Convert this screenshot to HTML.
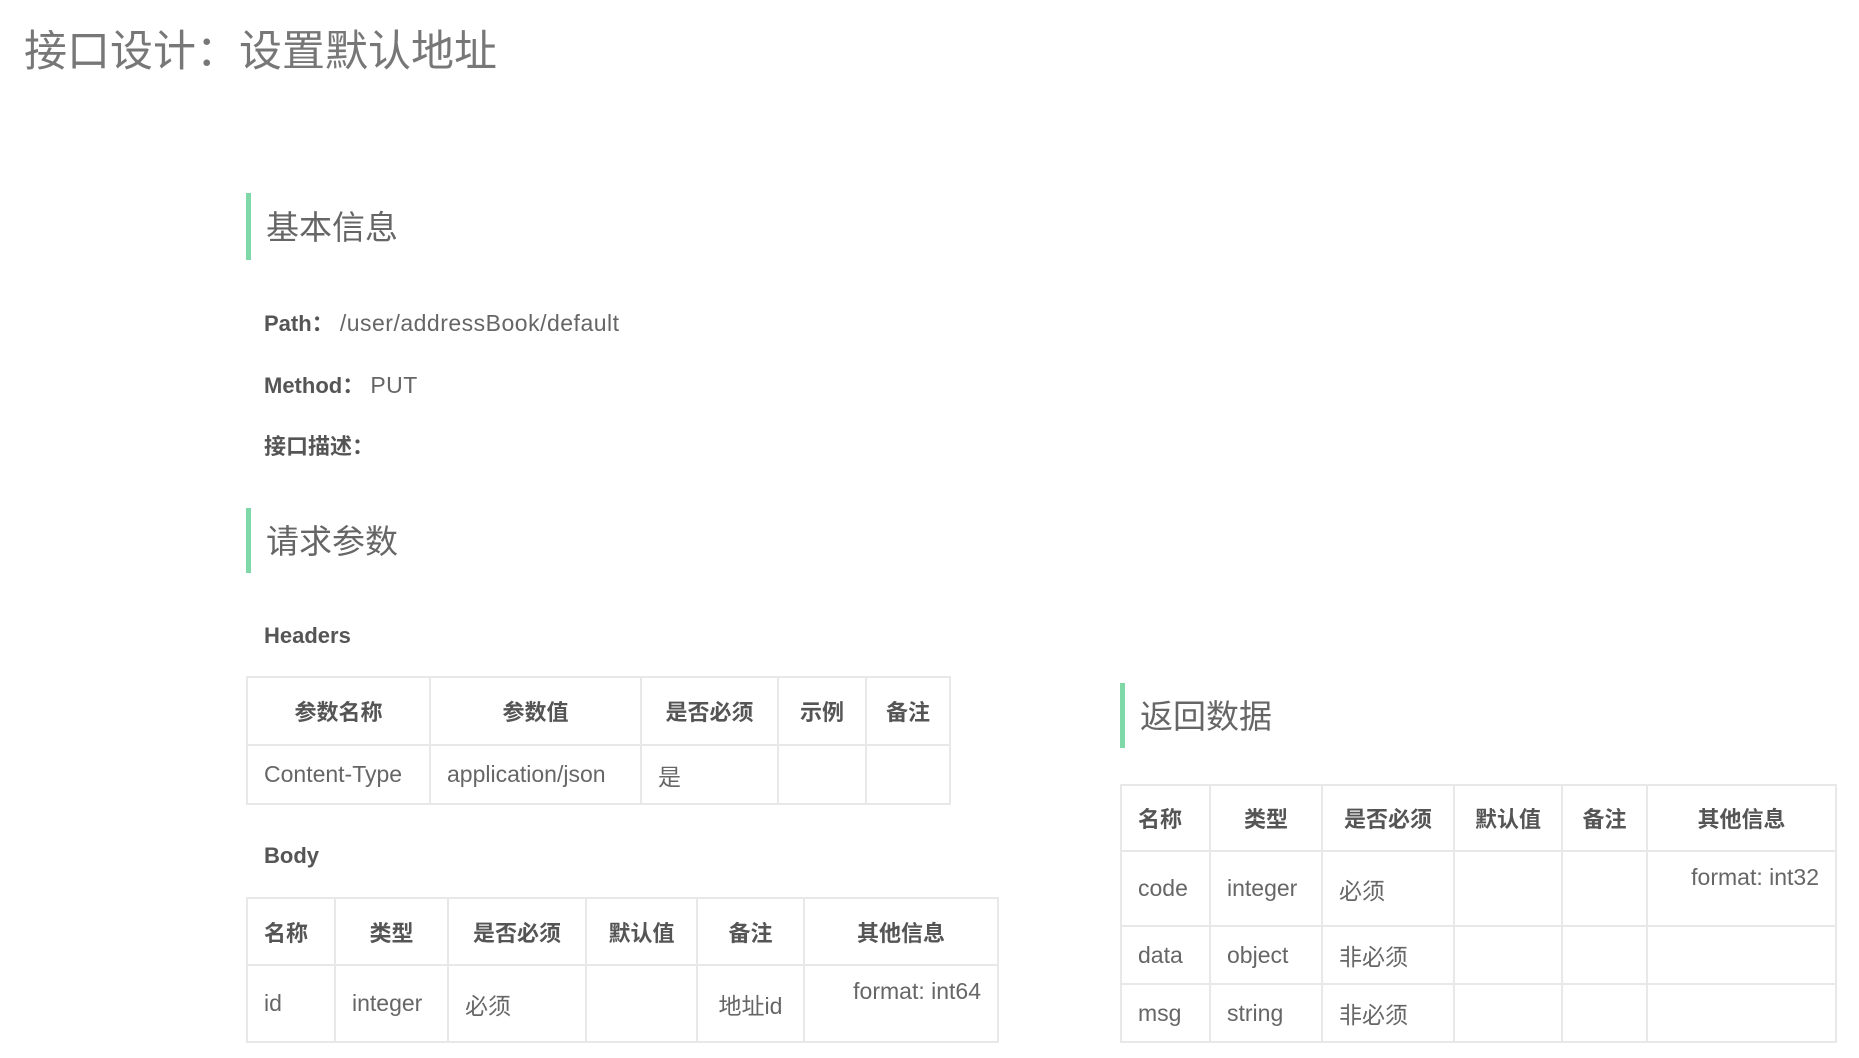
<!DOCTYPE html>
<html><head><meta charset="utf-8"><style>
*{margin:0;padding:0;box-sizing:border-box}
body{width:1859px;height:1058px;background:#fff;position:relative;overflow:hidden;font-family:"Liberation Sans","Noto Sans CJK SC",sans-serif;color:#666}
.a{position:absolute;white-space:nowrap}
.title{left:24px;top:24px;font-size:43px;color:#777;line-height:56px}
.bar{position:absolute;width:5px;background:#7ed8a8}
.h{font-size:33px;color:#666;line-height:40px}
.lb{font-size:22px;line-height:28px;color:#555}
.lb b{color:#555}
.lb span{font-size:23px;letter-spacing:0.5px;color:#666}
table{position:absolute;border-collapse:collapse;font-size:23px;color:#666}
td,th{border:2px solid #e8e8e8;padding:0 16px;white-space:nowrap}
th{font-weight:bold;color:#555;text-align:center;font-size:22px}
td{text-align:left}
td.f{text-align:right;vertical-align:top;padding-top:12px}
</style></head><body>
<div class="a title">接口设计：设置默认地址</div>

<div class="bar" style="left:246px;top:193px;height:67px"></div>
<div class="a h" style="left:266px;top:208px">基本信息</div>
<div class="a lb" style="left:264px;top:309px"><b>Path：</b> <span>/user/addressBook/default</span></div>
<div class="a lb" style="left:264px;top:371px"><b>Method：</b> <span>PUT</span></div>
<div class="a lb" style="left:264px;top:433px"><b>接口描述：</b></div>

<div class="bar" style="left:246px;top:508px;height:65px"></div>
<div class="a h" style="left:266px;top:522px">请求参数</div>
<div class="a lb" style="left:264px;top:622px"><b>Headers</b></div>

<table style="left:246px;top:676px;width:705px">
<tr style="height:68px"><th style="width:183px">参数名称</th><th style="width:211px">参数值</th><th style="width:137px">是否必须</th><th style="width:88px">示例</th><th>备注</th></tr>
<tr style="height:59px"><td>Content-Type</td><td>application/json</td><td>是</td><td></td><td></td></tr>
</table>

<div class="a lb" style="left:264px;top:842px"><b>Body</b></div>

<table style="left:246px;top:897px;width:753px">
<tr style="height:67px"><th style="width:88px;text-align:left">名称</th><th style="width:113px">类型</th><th style="width:138px">是否必须</th><th style="width:111px">默认值</th><th style="width:107px">备注</th><th>其他信息</th></tr>
<tr style="height:77px"><td>id</td><td>integer</td><td>必须</td><td></td><td style="text-align:center">地址id</td><td class="f">format: int64</td></tr>
</table>

<div class="bar" style="left:1120px;top:683px;height:65px"></div>
<div class="a h" style="left:1140px;top:697px">返回数据</div>

<table style="left:1120px;top:784px;width:717px">
<tr style="height:66px"><th style="width:89px;text-align:left">名称</th><th style="width:112px">类型</th><th style="width:132px">是否必须</th><th style="width:108px">默认值</th><th style="width:85px">备注</th><th>其他信息</th></tr>
<tr style="height:75px"><td>code</td><td>integer</td><td>必须</td><td></td><td></td><td class="f">format: int32</td></tr>
<tr style="height:58px"><td>data</td><td>object</td><td>非必须</td><td></td><td></td><td></td></tr>
<tr style="height:58px"><td>msg</td><td>string</td><td>非必须</td><td></td><td></td><td></td></tr>
</table>
</body></html>
